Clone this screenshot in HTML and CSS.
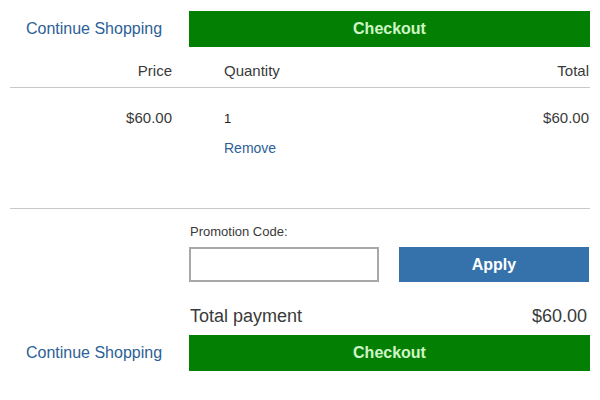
FILE: index.html
```html
<!DOCTYPE html>
<html>
<head>
<meta charset="utf-8">
<link rel="stylesheet" href="styles.css">
</head>
<body>
<div class="cart">
  <div class="action-row top">
    <a class="continue" href="#">Continue Shopping</a>
    <button class="checkout">Checkout</button>
  </div>
  <div class="head-row">
    <div class="c-price">Price</div>
    <div class="c-qty">Quantity</div>
    <div class="c-total">Total</div>
  </div>
  <div class="item-row">
    <div class="c-price">$60.00</div>
    <div class="c-qty">
      <div class="qty">1</div>
      <a class="remove" href="#">Remove</a>
    </div>
    <div class="c-total">$60.00</div>
  </div>
  <div class="summary">
    <div class="promo-label">Promotion Code:</div>
    <div class="promo-row">
      <input class="promo-input" type="text">
      <button class="apply">Apply</button>
    </div>
    <div class="grand">
      <span>Total payment</span>
      <span>$60.00</span>
    </div>
  </div>
  <div class="action-row bottom">
    <a class="continue" href="#">Continue Shopping</a>
    <button class="checkout">Checkout</button>
  </div>
</div>
</body>
</html>
```

FILE: styles.css
```css
* { box-sizing: border-box; }
html, body { margin: 0; padding: 0; background: #fff; }
body {
  font-family: "Liberation Sans", Arial, sans-serif;
  color: #3a3a3a;
  width: 600px;
  height: 400px;
  overflow: hidden;
}
.cart {
  padding-left: 10px;
  width: 590px;
}
.action-row {
  display: flex;
  align-items: center;
  gap: 9px;
  height: 36px;
}
.action-row.top { margin-top: 11px; }
.action-row.bottom { margin-top: 9px; }
.continue {
  width: 168px;
  text-align: center;
  color: #2d5f96;
  text-decoration: none;
  font-size: 16px;
}
.action-row .checkout { margin-left: 2px; }
.checkout {
  flex: 1;
  height: 36px;
  border: none;
  background: #038003;
  color: #d0f5c6;
  font-family: "Liberation Sans", Arial, sans-serif;
  font-weight: bold;
  font-size: 16px;
  padding: 0;
  margin: 0;
}
.head-row, .item-row {
  display: flex;
  border-bottom: 1px solid #c8c8c8;
  font-size: 15px;
  line-height: 20px;
}
.head-row {
  height: 41px;
  padding-top: 14px;
}
.item-row {
  height: 121px;
  padding-top: 20px;
}
.c-price {
  width: 162px;
  text-align: right;
}
.c-qty {
  margin-left: 52px;
  flex: 1;
}
.c-total {
  text-align: right;
  padding-right: 1px;
}
.qty {
  font-size: 13px;
  line-height: 20px;
  margin-top: 1px;
  color: #222;
}
.remove {
  display: block;
  margin-top: 9px;
  font-size: 14px;
  color: #2d5f96;
  text-decoration: none;
}
.summary {
  margin-left: 179px;
  width: 400px;
  padding-top: 15px;
}
.promo-label {
  font-size: 13px;
  line-height: 16px;
  padding-left: 1px;
}
.promo-row {
  display: flex;
  gap: 20px;
  margin-top: 7px;
}
.promo-input {
  width: 190px;
  height: 35px;
  border: 2px solid #a8a8a8;
  margin: 0;
  padding: 0;
  background: #fff;
}
.apply {
  width: 190px;
  height: 35px;
  border: none;
  background: #3571ab;
  color: #fff;
  font-family: "Liberation Sans", Arial, sans-serif;
  font-weight: bold;
  font-size: 16px;
  margin: 0;
  padding: 0;
}
.grand {
  display: flex;
  justify-content: space-between;
  margin-top: 24px;
  font-size: 18px;
  line-height: 20px;
  padding-left: 1px;
  padding-right: 2px;
}
```
